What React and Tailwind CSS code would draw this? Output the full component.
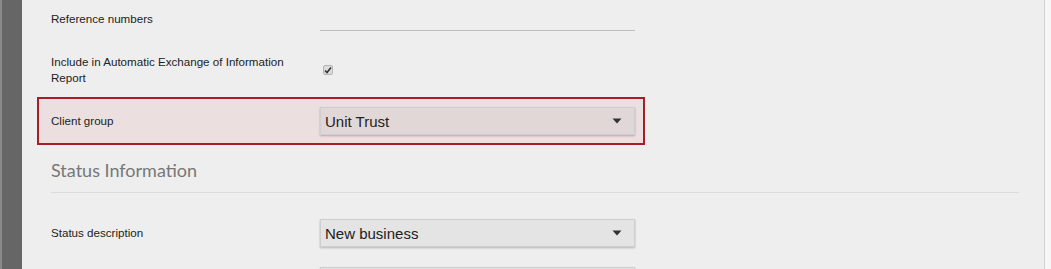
const Caret = () => (
  <svg width="10" height="6" viewBox="0 0 10 6" className="shrink-0">
    <path d="M0.5 0.5h9L5 5.5z" fill="#333" />
  </svg>
);

const Select = ({ value, tinted }) => (
  <div
    className={`w-[315px] h-[28px] flex items-center justify-between pl-[4px] pr-[12px] border border-[#cfcfcf] shadow-[0_1px_2px_rgba(0,0,0,0.25)] ${
      tinted ? "bg-[#e2d7d7]" : "bg-[#e4e4e4]"
    }`}
  >
    <span className="text-[15px] text-[#222] leading-none">{value}</span>
    <Caret />
  </div>
);

const Row = ({ label, children, className = "" }) => (
  <div className={`w-[608px] flex items-center border-2 border-transparent pl-[12px] ${className}`}>
    <div className="w-[269px] shrink-0 text-[11.6px] leading-[16px] text-[#222] pr-4">{label}</div>
    <div className="flex-1">{children}</div>
  </div>
);

export default function App() {
  return (
    <div
      className="flex w-[1051px] h-[269px] overflow-hidden bg-[#eeeeee]"
      style={{ fontFamily: '"Liberation Sans", Arial, sans-serif' }}
    >
      {/* left rail */}
      <div className="w-[22px] shrink-0 bg-[#666666] border-l-2 border-[#8a8a8a]" />

      {/* form body */}
      <div className="flex-1 pl-[15px] pr-[25px] border-r border-[#d0d0d0]">
        <Row label="Reference numbers" className="h-[38px]">
          <div className="w-[315px] h-[24px] border-b border-[#bdbdbd]" />
        </Row>

        <Row
          label="Include in Automatic Exchange of Information Report"
          className="h-[50px] mt-[7px]"
        >
          <span className="ml-[3px] mt-[0px] w-[10px] h-[10px] flex items-center justify-center rounded-[2px] border border-[#b5b5b5] bg-[#dcdcdc]">
            <svg width="8" height="8" viewBox="0 0 8 8">
              <path d="M1 4.5l2 2L7 1.5" stroke="#333" strokeWidth="1.6" fill="none" />
            </svg>
          </span>
        </Row>

        <Row label="Client group" className="h-[48px] mt-[2px] !border-[#a61e27] bg-[#ecdfdf]">
          <Select value="Unit Trust" tinted />
        </Row>

        <div
          className="ml-[14px] mt-[13px] h-[35px] border-b border-[#dcdcdc] text-[18px] leading-[24px] text-[#777]"
          style={{ fontFamily: "Lato, 'Open Sans', sans-serif" }}
        >
          Status Information
        </div>

        <Row label="Status description" className="h-[48px] mt-[16px]">
          <Select value="New business" />
        </Row>

        <Row label="" className="h-[48px]">
          <Select value="" />
        </Row>
      </div>
      <div className="w-[6px] shrink-0 bg-[#f6f6f6]" />
    </div>
  );
}
